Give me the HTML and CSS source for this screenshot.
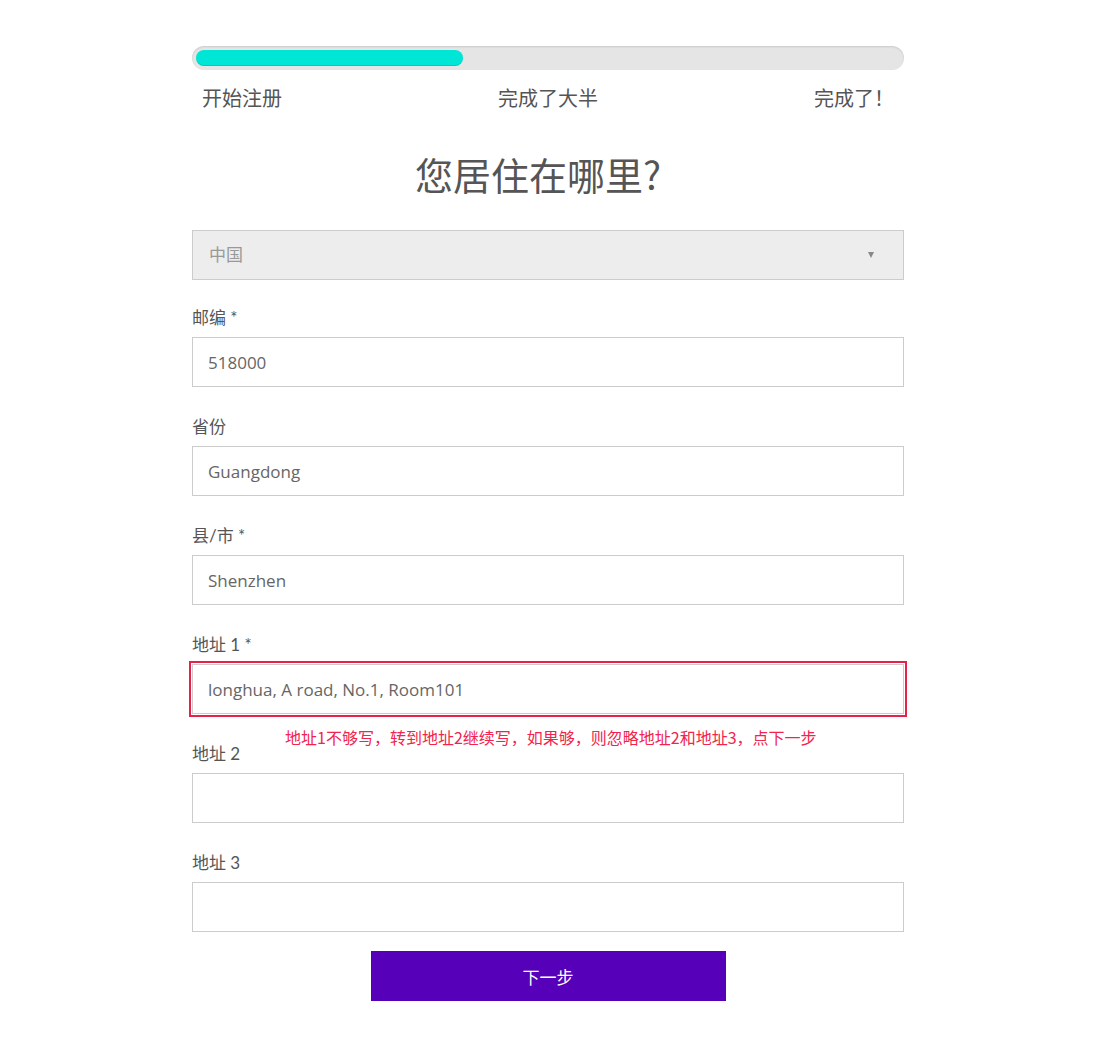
FILE: index.html
```html
<!DOCTYPE html>
<html lang="zh-CN">
<head>
<meta charset="utf-8">
<title>您居住在哪里?</title>
<link rel="stylesheet" href="styles.css">
</head>
<body>
<div class="wrap">
  <div class="progress"><div class="progress-fill"></div></div>
  <div class="steps">
    <span class="step step-start">开始注册</span>
    <span class="step step-mid">完成了大半</span>
    <span class="step step-end">完成了！</span>
  </div>
  <h1 class="title">您居住在哪里?</h1>
  <div class="select">
    <span class="select-value">中国</span>
    <span class="select-arrow"></span>
  </div>
  <div class="field">
    <label class="label">邮编 *</label>
    <input class="input" type="text" value="518000">
  </div>
  <div class="field">
    <label class="label">省份</label>
    <input class="input" type="text" value="Guangdong">
  </div>
  <div class="field">
    <label class="label">县/市 *</label>
    <input class="input" type="text" value="Shenzhen">
  </div>
  <div class="field field-note">
    <label class="label">地址 1 *</label>
    <input class="input input-marked" type="text" value="longhua, A road, No.1, Room101">
    <div class="note">地址1不够写，转到地址2继续写，如果够，则忽略地址2和地址3，点下一步</div>
  </div>
  <div class="field">
    <label class="label">地址 2</label>
    <input class="input" type="text" value="">
  </div>
  <div class="field">
    <label class="label">地址 3</label>
    <input class="input" type="text" value="">
  </div>
  <div class="actions">
    <button class="btn" type="button">下一步</button>
  </div>
</div>
</body>
</html>
```

FILE: styles.css
```css
html, body {
  margin: 0;
  padding: 0;
  background: #ffffff;
}

body {
  font-family: Lato, "Noto Sans CJK SC", sans-serif;
  color: #555555;
}

.wrap {
  width: 712px;
  margin-left: 192px;
  padding-top: 46px;
}

.progress {
  height: 24px;
  box-sizing: border-box;
  padding: 4px;
  border-radius: 12px;
  background: #e5e5e5;
  box-shadow: inset 0 1px 2px rgba(0, 0, 0, 0.12);
}

.progress-fill {
  width: 267px;
  height: 16px;
  border-radius: 8px;
  background: #00e6d6;
  box-shadow: inset 0 -1px 0 rgba(0, 120, 110, 0.25);
}

.steps {
  display: grid;
  grid-template-columns: 1fr auto 1fr;
  margin-top: 15px;
  font-family: "Noto Sans CJK SC", sans-serif;
  font-size: 20px;
  line-height: 26px;
  color: #555555;
}

.step-start {
  justify-self: start;
  padding-left: 10px;
}

.step-end {
  justify-self: end;
  padding-right: 10px;
}

.title {
  margin: 38px 0 31px 0;
  padding-right: 20px;
  text-align: center;
  font-family: "Noto Sans CJK SC", sans-serif;
  font-weight: 400;
  font-size: 38px;
  line-height: 50px;
  color: #555555;
}

.select {
  height: 50px;
  box-sizing: border-box;
  border: 1px solid #cccccc;
  background: #ededed;
  display: flex;
  align-items: center;
  justify-content: space-between;
  padding: 0 29px 0 16px;
}

.select-value {
  font-family: "Noto Sans CJK SC", sans-serif;
  font-size: 17px;
  line-height: 22px;
  margin-top: -3px;
  color: #999999;
}

.select-arrow {
  width: 0;
  height: 0;
  border-left: 3.5px solid transparent;
  border-right: 3.5px solid transparent;
  border-top: 6px solid #888888;
}

.field {
  margin-top: 28px;
}

.select + .field {
  margin-top: 26px;
}

.field-note {
  position: relative;
}

.label {
  display: block;
  font-family: Lato, "Noto Sans CJK SC", sans-serif;
  font-size: 17px;
  line-height: 24px;
  margin-bottom: 7px;
  color: #555555;
}

.input {
  display: block;
  width: 100%;
  height: 50px;
  box-sizing: border-box;
  border: 1px solid #cccccc;
  border-radius: 0;
  background: #ffffff;
  padding: 0 15px;
  font-family: "Open Sans", "Noto Sans CJK SC", sans-serif;
  font-size: 17px;
  color: #666666;
  outline: none;
  margin: 0;
}

.input-marked {
  outline: 2px solid #e8214b;
  outline-offset: 1px;
}

.note {
  position: absolute;
  left: 93px;
  top: 93px;
  font-family: "Noto Sans CJK SC", sans-serif;
  font-size: 16px;
  line-height: 22px;
  color: #f2234d;
  white-space: nowrap;
}

.actions {
  display: flex;
  justify-content: center;
  margin-top: 19px;
}

.btn {
  width: 355px;
  height: 50px;
  border: none;
  border-radius: 0;
  background: #5600b9;
  color: #ffffff;
  font-family: "Noto Sans CJK SC", sans-serif;
  font-size: 17px;
  cursor: pointer;
}
```
